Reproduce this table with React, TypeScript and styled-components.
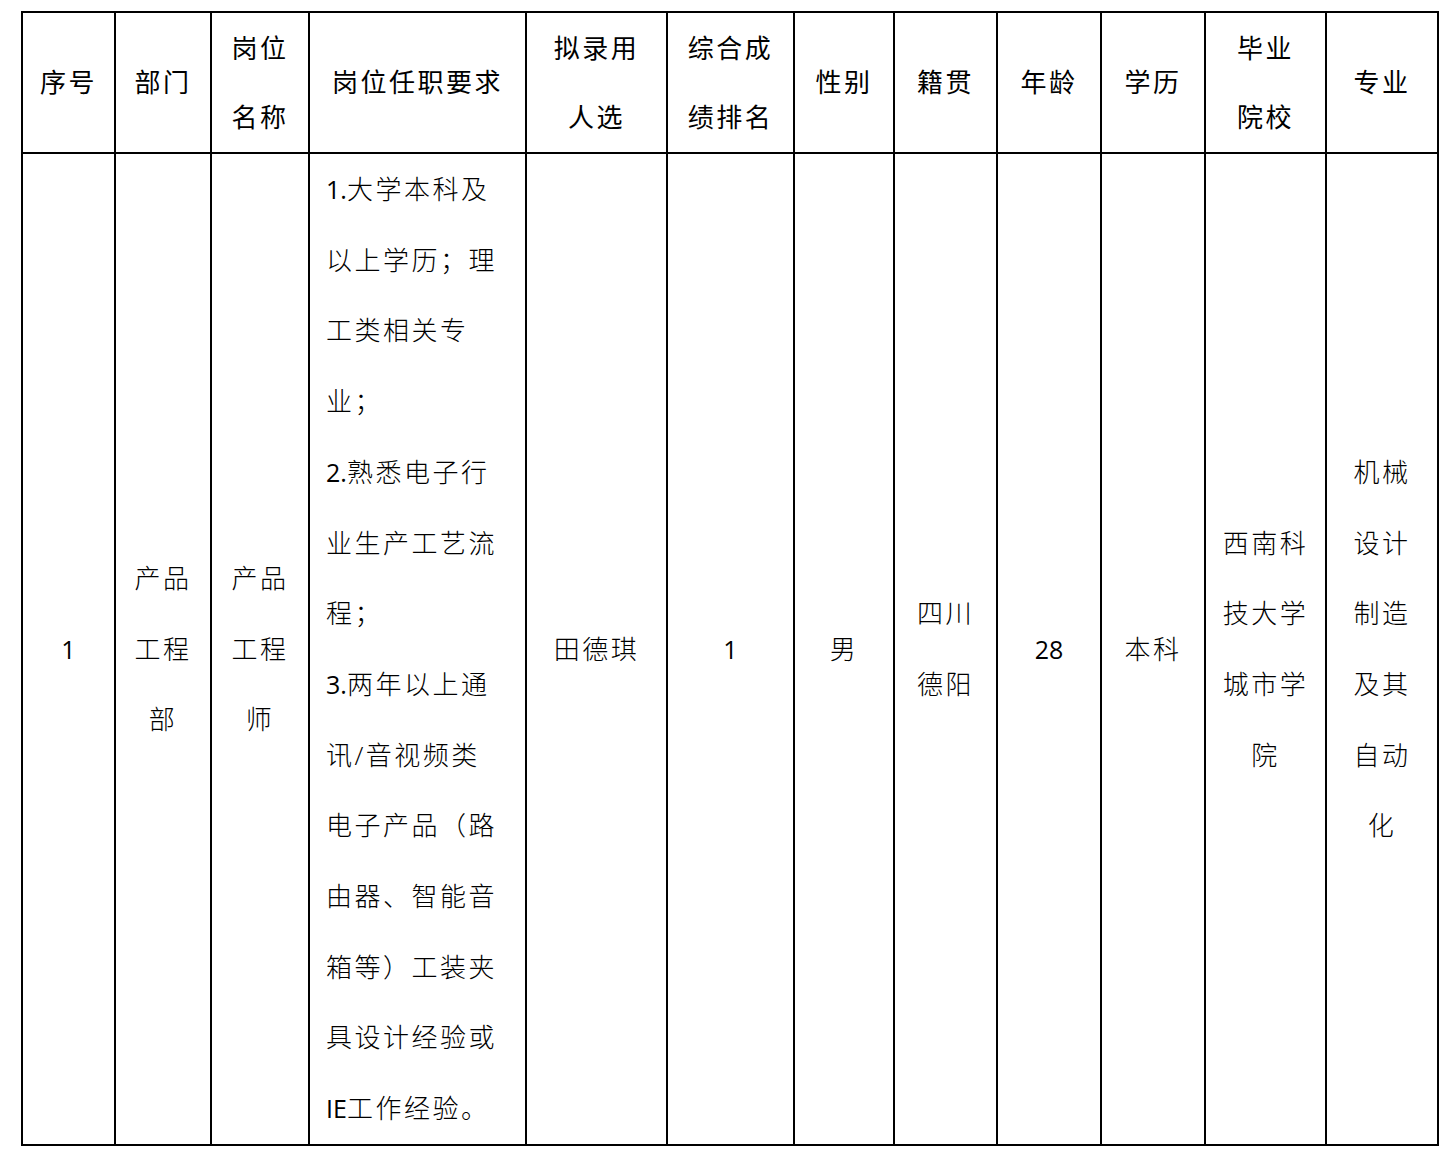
import { createGlobalStyle, styled } from "styled-components";

const GlobalStyle = createGlobalStyle`
  html, body {
    margin: 0;
    padding: 0;
    background: #fff;
  }
  body {
    font-family: "Open Sans", "Noto Sans CJK SC", sans-serif;
    color: #000;
  }
`;

const Page = styled.div`
  padding: 11px 0 0 21px;
`;

const Table = styled.table`
  border-collapse: collapse;
  table-layout: fixed;
  width: 1418px;
  font-size: 26px;
  letter-spacing: 2.5px;
`;

const HeadCell = styled.th`
  border: 2px solid #000;
  height: 139px;
  padding: 0;
  font-weight: 400;
  text-align: center;
  vertical-align: middle;
  line-height: 69px;
`;

const BodyCell = styled.td<{ $left?: boolean }>`
  border: 2px solid #000;
  padding: ${(p) => (p.$left ? "0 0 0 16px" : "0")};
  font-weight: 300;
  text-align: ${(p) => (p.$left ? "left" : "center")};
  vertical-align: middle;
  line-height: 70.7px;
`;

const Line = styled.span`
  display: block;
  white-space: nowrap;
`;

const Num = styled.span`
  font-size: 25px;
  font-weight: 400;
  letter-spacing: 0;
`;

const widths = [93, 96, 98, 217, 141, 127, 100, 103, 104, 104, 121, 112];

// Latin runs (digits, "IE") are set in a regular-weight span, as in the source
const Text = ({ value }: { value: string }) => (
  <>
    {value.split(/([A-Za-z0-9.]+)/).map((part, i) =>
      /^[A-Za-z0-9.]+$/.test(part) ? <Num key={i}>{part}</Num> : part
    )}
  </>
);

const Lines = ({ items }: { items: string[] }) => (
  <>
    {items.map((t, i) => (
      <Line key={i}>
        <Text value={t} />
      </Line>
    ))}
  </>
);

const headers: string[][] = [
  ["序号"],
  ["部门"],
  ["岗位", "名称"],
  ["岗位任职要求"],
  ["拟录用", "人选"],
  ["综合成", "绩排名"],
  ["性别"],
  ["籍贯"],
  ["年龄"],
  ["学历"],
  ["毕业", "院校"],
  ["专业"],
];

const requirements = [
  "1.大学本科及",
  "以上学历；理",
  "工类相关专",
  "业；",
  "2.熟悉电子行",
  "业生产工艺流",
  "程；",
  "3.两年以上通",
  "讯/音视频类",
  "电子产品（路",
  "由器、智能音",
  "箱等）工装夹",
  "具设计经验或",
  "IE工作经验。",
];

const row: { lines: string[]; left?: boolean }[] = [
  { lines: ["1"] },
  { lines: ["产品", "工程", "部"] },
  { lines: ["产品", "工程", "师"] },
  { lines: requirements, left: true },
  { lines: ["田德琪"] },
  { lines: ["1"] },
  { lines: ["男"] },
  { lines: ["四川", "德阳"] },
  { lines: ["28"] },
  { lines: ["本科"] },
  { lines: ["西南科", "技大学", "城市学", "院"] },
  { lines: ["机械", "设计", "制造", "及其", "自动", "化"] },
];

export default function App() {
  return (
    <Page>
      <GlobalStyle />
      <Table>
        <colgroup>
          {widths.map((w, i) => (
            <col key={i} style={{ width: w }} />
          ))}
        </colgroup>
        <thead>
          <tr>
            {headers.map((h, i) => (
              <HeadCell key={i}>
                <Lines items={h} />
              </HeadCell>
            ))}
          </tr>
        </thead>
        <tbody>
          <tr>
            {row.map((c, i) => (
              <BodyCell key={i} $left={c.left}>
                <Lines items={c.lines} />
              </BodyCell>
            ))}
          </tr>
        </tbody>
      </Table>
    </Page>
  );
}
